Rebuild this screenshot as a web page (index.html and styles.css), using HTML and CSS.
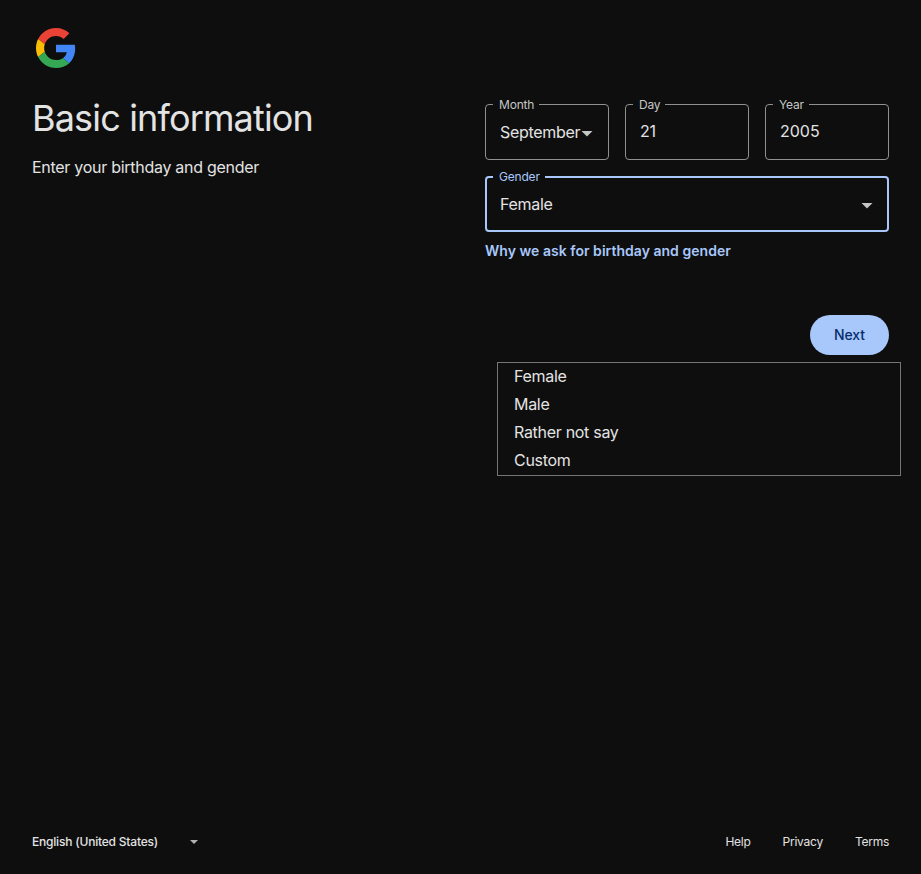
FILE: index.html
```html
<!DOCTYPE html>
<html lang="en">
<head>
<meta charset="utf-8">
<title>Basic information</title>
<link rel="stylesheet" href="styles.css">
</head>
<body>
<div class="page">
  <header class="brand">
    <svg class="logo" viewBox="0 0 48 48" aria-label="Google">
      <path fill="#EA4335" d="M24 9.5c3.54 0 6.71 1.22 9.21 3.6l6.85-6.85C35.9 2.38 30.47 0 24 0 14.62 0 6.51 5.38 2.56 13.22l7.98 6.19C12.43 13.72 17.74 9.5 24 9.5z"/>
      <path fill="#4285F4" d="M46.98 24.55c0-1.57-.15-3.09-.38-4.55H24v9.02h12.94c-.58 2.96-2.26 5.48-4.78 7.18l7.73 6c4.51-4.18 7.09-10.36 7.09-17.65z"/>
      <path fill="#FBBC05" d="M10.53 28.59c-.48-1.45-.76-2.99-.76-4.59s.27-3.14.76-4.59l-7.98-6.19C.92 16.46 0 20.12 0 24c0 3.88.92 7.54 2.56 10.78l7.97-6.19z"/>
      <path fill="#34A853" d="M24 48c6.48 0 11.93-2.13 15.89-5.81l-7.73-6c-2.15 1.45-4.92 2.3-8.16 2.3-6.26 0-11.57-4.22-13.47-9.91l-7.98 6.19C6.51 42.62 14.62 48 24 48z"/>
    </svg>
  </header>
  <main class="content">
    <section class="intro">
      <h1 class="title">Basic information</h1>
      <p class="subtitle">Enter your birthday and gender</p>
    </section>
    <form class="form">
      <div class="row">
        <div class="field"><span class="label">Month</span><span class="value">September</span><i class="arrow"></i></div>
        <div class="field typed"><span class="label">Day</span><span class="value">21</span></div>
        <div class="field typed"><span class="label">Year</span><span class="value year">2005</span></div>
      </div>
      <div class="field focused"><span class="label">Gender</span><span class="value">Female</span><i class="arrow"></i></div>
      <a class="why">Why we ask for birthday and gender</a>
      <div class="actions">
        <button type="button" class="next">Next</button>
        <ul class="menu">
          <li>Female</li>
          <li>Male</li>
          <li>Rather not say</li>
          <li>Custom</li>
        </ul>
      </div>
    </form>
  </main>
  <footer class="footer">
    <div class="language"><span>English (United States)</span><i class="arrow small"></i></div>
    <nav class="links"><a>Help</a><a>Privacy</a><a>Terms</a></nav>
  </footer>
</div>
</body>
</html>
```
FILE: styles.css
```css
* { box-sizing: border-box; }
body {
  margin: 0;
  background: #0e0e0e;
  color: #e3e3e3;
  font-family: Inter, Roboto, sans-serif;
  font-size: 16px;
  letter-spacing: -0.3px;
}
.page {
  height: 874px;
  padding: 28px 32px 0;
  display: flex;
  flex-direction: column;
}
.brand { height: 40px; padding-left: 4px; }
.logo { width: 40px; height: 40px; display: block; }
.content {
  flex: 1;
  padding-top: 28px;
  display: grid;
  grid-template-columns: 1fr 404px;
}
.title {
  margin: 0;
  font-size: 36px;
  font-weight: 400;
  line-height: 44px;
  letter-spacing: -0.84px;
}
.subtitle { margin: 15px 0 0; line-height: 24px; letter-spacing: -0.28px; }
.form { padding-top: 8px; }
.row { display: flex; gap: 16px; margin-bottom: 16px; }
.field {
  position: relative;
  height: 56px;
  border: 1px solid #8e918f;
  border-radius: 4px;
  padding: 0 15px 0 14px;
  display: flex;
  align-items: center;
  justify-content: space-between;
}
.row .field { flex: 1; }
.typed .value { padding-bottom: 2px; }
.year { letter-spacing: 0; }
.label {
  position: absolute;
  top: -8px;
  left: 7px;
  padding: 0 5px 0 6px;
  background: #0e0e0e;
  color: #c4c7c5;
  font-size: 12px;
  line-height: 16px;
  letter-spacing: -0.2px;
}
.focused { border: 2px solid #a8c7fa; padding: 0 14px 0 13px; }
.focused .label { color: #a8c7fa; top: -9px; left: 6px; }
.arrow {
  flex: none;
  width: 12px;
  height: 6px;
  margin-top: 3px;
  background: #c4c7c5;
  clip-path: polygon(0 0, 100% 0, 50% 100%);
}
.why {
  display: block;
  margin-top: 9px;
  color: #a8c7fa;
  font-size: 14px;
  font-weight: 600;
  line-height: 20px;
  letter-spacing: 0.03px;
}
.actions { position: relative; margin-top: 54px; display: flex; justify-content: flex-end; }
.next {
  width: 79px;
  height: 40px;
  padding: 0;
  border: 0;
  border-radius: 20px;
  background: #a8c7fa;
  color: #062e6f;
  font: 500 14px/20px Inter, Roboto, sans-serif;
  letter-spacing: -0.1px;
}
.menu {
  position: absolute;
  top: 47px;
  left: 12px;
  width: 404px;
  height: 114px;
  margin: 0;
  padding: 0 16px;
  border: 1px solid #757575;
  background: #0e0e0e;
  list-style: none;
}
.menu li { height: 28px; line-height: 26px; }
.footer {
  height: 64px;
  padding-bottom: 2px;
  display: flex;
  align-items: center;
  justify-content: space-between;
  font-size: 12px;
  letter-spacing: -0.2px;
}
.language { width: 166px; display: flex; align-items: center; justify-content: space-between; font-weight: 500; }
.small { width: 8px; height: 4px; margin-top: 2px; background: #b0b3b4; }
.links { display: flex; gap: 32px; letter-spacing: -0.25px; }
```
